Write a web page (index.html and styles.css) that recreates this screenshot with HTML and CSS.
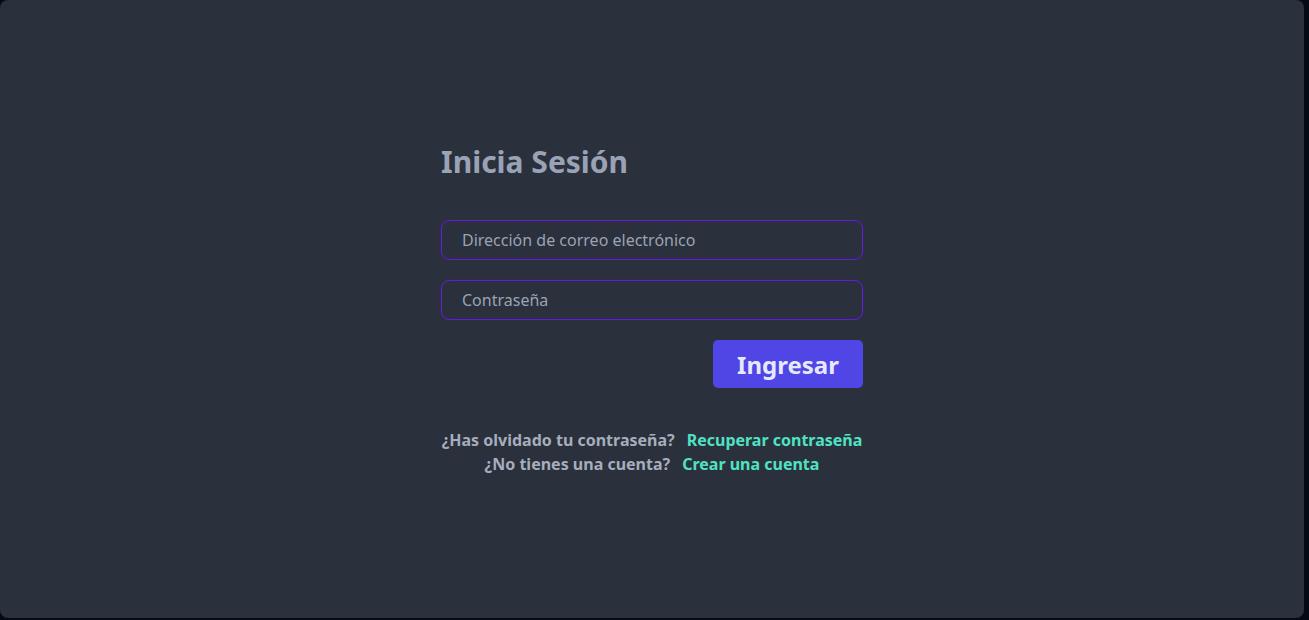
FILE: index.html
```html
<!DOCTYPE html>
<html lang="es">
<head>
<meta charset="utf-8">
<title>Inicia Sesión</title>
<link rel="stylesheet" href="styles.css">
</head>
<body>
<main class="panel">
  <form class="login">
    <h1 class="title">Inicia Sesión</h1>
    <input class="field" type="email" placeholder="Dirección de correo electrónico">
    <input class="field" type="password" placeholder="Contraseña">
    <div class="actions">
      <button class="btn" type="button">Ingresar</button>
    </div>
    <div class="links">
      <p class="line"><span>¿Has olvidado tu contraseña?</span><a href="#">Recuperar contraseña</a></p>
      <p class="line"><span>¿No tienes una cuenta?</span><a href="#">Crear una cuenta</a></p>
    </div>
  </form>
</main>
</body>
</html>
```

FILE: styles.css
```css
html, body {
  margin: 0;
  padding: 0;
  background: #050915;
  font-family: "Noto Sans", "Open Sans", sans-serif;
}
.panel {
  box-sizing: border-box;
  width: 1304px;
  height: 618px;
  padding-top: 2px;
  background: #2a303c;
  border-radius: 8px;
  display: flex;
  align-items: center;
  justify-content: center;
}
.login {
  width: 422px;
  display: flex;
  flex-direction: column;
  gap: 20px;
}
.title {
  margin: 0 0 20px 0;
  font-size: 30px;
  line-height: 36px;
  font-weight: 700;
  color: #9aa3b5;
}
.field {
  box-sizing: border-box;
  height: 40px;
  width: 100%;
  margin: 0;
  padding: 0 20px;
  background: transparent;
  border: 1px solid #6419e6;
  border-radius: 8px;
  font-family: inherit;
  font-size: 16px;
  color: #a6adbb;
  outline: none;
}
.field::placeholder {
  color: #9ba3b3;
  opacity: 1;
}
.actions {
  display: flex;
  justify-content: flex-end;
}
.btn {
  width: 150px;
  height: 48px;
  border: none;
  border-radius: 5px;
  background: #4f46e5;
  color: #e6e9fb;
  font-family: inherit;
  font-size: 24px;
  font-weight: 700;
  cursor: pointer;
}
.links {
  margin-top: 20px;
  display: flex;
  flex-direction: column;
  align-items: center;
}
.line {
  margin: 0;
  display: flex;
  gap: 12px;
  font-size: 16px;
  line-height: 24px;
  font-weight: 700;
  color: #a6adbb;
}
.line a {
  color: #4fe3c3;
  text-decoration: none;
}
```
